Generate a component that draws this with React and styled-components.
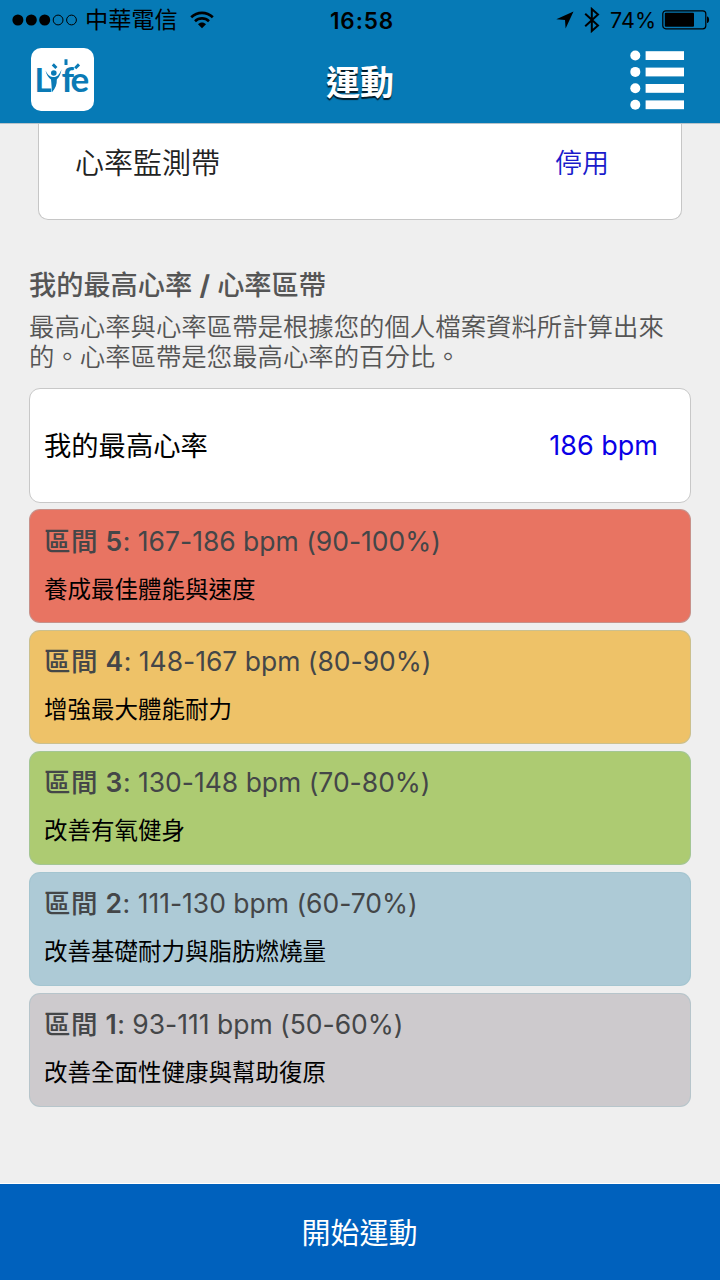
import React from 'react'
import styled, { createGlobalStyle } from 'styled-components'

const zones = [
  { id: 5, range: '167-186 bpm (90-100%)', text: '養成最佳體能與速度', color: '#e87462' },
  { id: 4, range: '148-167 bpm (80-90%)', text: '增強最大體能耐力', color: '#eec268' },
  { id: 3, range: '130-148 bpm (70-80%)', text: '改善有氧健身', color: '#adcb72' },
  { id: 2, range: '111-130 bpm (60-70%)', text: '改善基礎耐力與脂肪燃燒量', color: '#adcad6' },
  { id: 1, range: '93-111 bpm (50-60%)', text: '改善全面性健康與幫助復原', color: '#cdcacd' },
]

const Signal = () => (
  <svg width="66" height="12" viewBox="0 0 66 12">
    <circle cx="5.9" cy="6" r="5.5" />
    <circle cx="19.3" cy="6" r="5.5" />
    <circle cx="32.7" cy="6" r="5.5" />
    <circle cx="46.1" cy="6" r="4.9" fill="none" stroke="#000" />
    <circle cx="59.5" cy="6" r="4.9" fill="none" stroke="#000" />
  </svg>
)

const Wifi = () => (
  <svg width="24" height="18" viewBox="0 0 24 18">
    <path d="M1.2 6.2C7.4 0.4 16.6 0.4 22.8 6.2" fill="none" stroke="#000" strokeWidth="2.7" />
    <path d="M5 10.2C9 6.4 15 6.4 19 10.2" fill="none" stroke="#000" strokeWidth="2.6" />
    <path d="M8 13.2C10.4 11 13.6 11 16 13.2L12 17.2Z" />
  </svg>
)

const Arrow = () => (
  <svg width="18" height="18" viewBox="0 0 18 18">
    <path d="M17.5 0.5L0.3 8.3L9 8.9L9.6 17.6Z" />
  </svg>
)

const Bluetooth = () => (
  <svg width="16" height="26" viewBox="0 0 16 26">
    <path d="M1.2 6.8L14 18.5L7.8 24V2L14 7.5L1.2 19.2" fill="none" stroke="#000" strokeWidth="2" />
  </svg>
)

const Battery = () => (
  <svg width="48" height="20" viewBox="0 0 48 20">
    <rect x="0.8" y="0.8" width="43" height="18" rx="3" fill="none" stroke="#000" strokeWidth="1.2" />
    <rect x="2.8" y="2.8" width="29.2" height="14" rx="1" />
    <path d="M45 6.5C47.8 6.8 47.8 12.8 45 13.1Z" />
  </svg>
)

const Logo = () => (
  <svg width="63" height="63" viewBox="0 0 63 63">
    <rect width="63" height="63" rx="10" fill="#fff" />
    <g fill="#0a7ab5" fontFamily="Lato" fontWeight="700">
      <text x="3.6" y="43.6" fontSize="33">L</text>
      <text x="30.6 39.6" y="43.6" fontSize="35">fe</text>
    </g>
    <circle cx="22.8" cy="25" r="2.8" fill="#0a7ab5" />
    <path d="M14.5 22.5C17 28 20 29 22.8 29C26 29 28.5 26.5 30.5 21.5C29.5 27.5 27.5 29.8 25.8 31.5C26 36.5 24.5 40.5 21 44.2C20.6 39 20.5 35.5 20 31.5C17.5 29.8 15.5 27 14.5 22.5Z" fill="#0a7ab5" />
    <path d="M21.8 16.4L25.4 20M35 11.2V17M48 16.4L44.2 20.2" stroke="#0a7ab5" strokeWidth="3" />
  </svg>
)

const Menu = () => (
  <svg width="54" height="60" viewBox="0 0 54 60" fill="#fff">
    {[5.5, 21.9, 38.3, 54.7].map((y) => (
      <g key={y}>
        <circle cx="5.3" cy={y} r="5" />
        <rect x="15.6" y={y - 4.3} width="38.4" height="8.8" />
      </g>
    ))}
  </svg>
)

const App = () => {
  return (
    <Page>
      <GlobalStyle />
      <Header>
        <StatusBar>
          <Side>
            <Signal />
            <Carrier>中華電信</Carrier>
            <Wifi />
          </Side>
          <Clock>16:58</Clock>
          <Side $end>
            <Arrow />
            <Bluetooth />
            <Percent>74%</Percent>
            <Battery />
          </Side>
        </StatusBar>
        <NavBar>
          <Logo />
          <Title>運動</Title>
          <Menu />
        </NavBar>
      </Header>

      <Content>
        <StrapCard>
          <StrapName>心率監測帶</StrapName>
          <StrapState>停用</StrapState>
        </StrapCard>

        <Heading>我的最高心率 <b>/</b> 心率區帶</Heading>
        <Intro>最高心率與心率區帶是根據您的個人檔案資料所計算出來的。心率區帶是您最高心率的百分比。</Intro>

        <List>
          <MaxCard>
            <MaxName>我的最高心率</MaxName>
            <MaxValue>186 bpm</MaxValue>
          </MaxCard>
          {zones.map((zone) => (
            <Zone key={zone.id} $color={zone.color}>
              <ZoneRange><ZoneName>區間 <b>{zone.id}</b></ZoneName>: {zone.range}</ZoneRange>
              <ZoneText>{zone.text}</ZoneText>
            </Zone>
          ))}
        </List>
      </Content>

      <StartButton>開始運動</StartButton>
    </Page>
  )
}

const GlobalStyle = createGlobalStyle`
  body {
    margin: 0;
  }
  * {
    box-sizing: border-box;
  }
  svg {
    display: block;
    flex: none;
  }
`;

const Page = styled.div`
  display: flex;
  flex-direction: column;
  width: 720px;
  height: 1280px;
  overflow: hidden;
  background: #efefef;
  font-family: Inter, "Noto Sans CJK TC", sans-serif;
  white-space: nowrap;
`;

const Header = styled.div`
  flex: none;
  height: 124px;
  background: #067ab6;
  border-bottom: 1px solid #b9c3c9;
`;

const StatusBar = styled.div`
  display: grid;
  grid-template-columns: 1fr auto 1fr;
  align-items: center;
  height: 39px;
  padding: 0 10px 0 12px;
  color: #000;
`;

const Side = styled.div`
  display: flex;
  align-items: center;
  justify-content: ${(props) => (props.$end ? 'flex-end' : 'flex-start')};
  gap: ${(props) => (props.$end ? '10px' : '0')};
`;

const Carrier = styled.span`
  margin: 0 12px 0 7px;
  padding-top: 1px;
  font-size: 23.2px;
  line-height: 39px;
  font-weight: 400;
`;

const Clock = styled.span`
  padding-left: 2px;
  font-size: 22.5px;
  line-height: 39px;
  font-weight: 600;
  letter-spacing: 0.9px;
`;

const Percent = styled.span`
  margin-right: -4px;
  font-size: 21.5px;
  line-height: 39px;
`;

const NavBar = styled.div`
  display: flex;
  justify-content: space-between;
  align-items: center;
  height: 81px;
  padding: 0 36px 0 31px;
`;

const Title = styled.h1`
  margin: 5px 4px 0 0;
  font-size: 34px;
  line-height: 79px;
  font-weight: 700;
  color: #fff;
  text-shadow: 0 2px 1px rgba(0, 0, 0, 0.8);
`;

const Content = styled.div`
  flex: 1;
  padding: 0 29px;
  border-bottom: 1px solid #fff;
`;

const StrapCard = styled.div`
  display: flex;
  justify-content: space-between;
  height: 96px;
  margin: 0 9px;
  padding: 0 72px 0 36px;
  line-height: 79px;
  background: #fff;
  border: 1px solid #c6c6c6;
  border-top: 0;
  border-radius: 0 0 10px 10px;
`;

const StrapName = styled.span`
  font-size: 29px;
  font-weight: 350;
  color: #222;
`;

const StrapState = styled.span`
  font-size: 27px;
  font-weight: 350;
  color: #1a1acb;
`;

const Heading = styled.h2`
  margin: 46px 0 0;
  font-size: 27.2px;
  line-height: 40px;
  font-weight: 500;
  color: #555;
`;

const Intro = styled.p`
  margin: 6px 0 0;
  font-size: 25.4px;
  line-height: 30px;
  font-weight: 350;
  color: #555;
  white-space: normal;
`;

const List = styled.div`
  display: flex;
  flex-direction: column;
  gap: 6.5px;
  margin-top: 16px;
`;

const MaxCard = styled.div`
  display: flex;
  justify-content: space-between;
  height: 114.5px;
  padding: 0 32px 0 14px;
  line-height: 114px;
  background: #fff;
  border: 1px solid #c8c8c8;
  border-radius: 11px;
`;

const MaxName = styled.span`
  padding-top: 1px;
  font-size: 27.3px;
  color: #000;
`;

const MaxValue = styled.span`
  font-size: 27px;
  color: #0a00e6;
`;

const Zone = styled.div`
  height: 114.4px;
  padding: 10.5px 14px;
  background: ${(props) => props.$color};
  border: 1px solid rgba(150, 190, 200, 0.4);
  border-radius: 11px;
`;

const ZoneRange = styled.div`
  font-size: 26.5px;
  line-height: 40px;
  letter-spacing: -0.02px;
  color: #444648;
`;

const ZoneName = styled.span`
  font-weight: 500;
  letter-spacing: 0.5px;

  b {
    font-weight: 600;
  }
`;

const ZoneText = styled.div`
  margin-top: 9px;
  font-size: 23.5px;
  line-height: 40px;
  color: #000;
`;

const StartButton = styled.button`
  flex: none;
  height: 96px;
  padding: 3px 1px 0 0;
  border: 0;
  background: #0061bd;
  color: #fff;
  font-family: inherit;
  font-size: 29px;
  line-height: 93px;
`;

export default App;
